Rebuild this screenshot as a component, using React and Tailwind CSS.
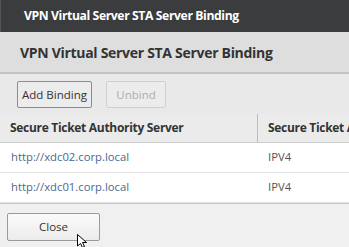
import React from 'react';

function Cursor() {
  return (
    <svg className="absolute left-[77px] top-[234px]" width="12" height="14" viewBox="0 0 12 14">
      <path d="M0.5 0.5 L0.5 12 L3.5 9.5 L5.5 13.5 L7.5 12.5 L5.5 8.5 L9.5 8.5 Z" fill="#fff" stroke="#000" strokeWidth="1" />
    </svg>
  );
}

export default function App() {
  const rows = [
    { url: 'http://xdc02.corp.local', type: 'IPV4' },
    { url: 'http://xdc01.corp.local', type: 'IPV4' },
  ];

  return (
    <div className="relative w-[349px] h-[247px] overflow-hidden bg-[#f0f0f0] font-['Open_Sans',sans-serif]">
      <div className="h-[32px] bg-[#3b3c3e] flex items-center pl-[23px] border-l border-[#555]">
        <span className="text-white font-bold text-[12.2px] tracking-[-0.4px]">VPN Virtual Server STA Server Binding</span>
      </div>
      <div className="h-[40px] bg-[#dedede] flex items-center pl-[20px]">
        <span className="text-[#333] font-bold text-[14px] tracking-[-0.3px]">VPN Virtual Server STA Server Binding</span>
      </div>
      <div className="h-[2px] bg-[#c4c4c4]"></div>
      <div className="h-[40px] bg-[#e9e9e9] flex items-center gap-[14px] pl-[17px] pt-[1px]">
        <button className="h-[27px] w-[75px] border border-[#8c8c8c] bg-[#ececec] text-[11.5px] text-[#333] rounded-[2px] whitespace-nowrap">Add Binding</button>
        <button className="h-[27px] w-[60px] border border-[#cfcfcf] bg-[#ececec] text-[11.5px] text-[#adadad] rounded-[2px]">Unbind</button>
      </div>
      <div className="flex h-[29px] bg-[#ebebeb] border-b border-[#cfcfcf]">
        <div className="w-[258px] shrink-0 flex items-center pl-[10px] border-r border-[#bbb] text-[12px] font-bold text-[#333] tracking-[-0.3px]">Secure Ticket Authority Server</div>
        <div className="flex-1 min-w-0 overflow-hidden flex items-center pl-[10px] text-[12px] font-bold text-[#333] whitespace-nowrap tracking-[-0.3px]">Secure Ticket Authority</div>
      </div>
      {rows.map((r) => (
        <div key={r.url} className="flex h-[30px] bg-white border-b border-[#e2e2e2] text-[11.3px] text-[#4a6a8c]">
          <div className="w-[258px] shrink-0 flex items-center pl-[11px]">{r.url}</div>
          <div className="flex-1 flex items-center pl-[10px] text-[#555]">{r.type}</div>
        </div>
      ))}
      <div className="border-t border-[#c8c8c8] pt-[9px] pl-[7px]">
        <button className="w-[93px] h-[28px] border border-[#9a9a9a] rounded-[2px] bg-gradient-to-b from-[#fafafa] to-[#ececec] text-[11.5px] text-[#333]">Close</button>
      </div>
      <Cursor />
    </div>
  );
}
